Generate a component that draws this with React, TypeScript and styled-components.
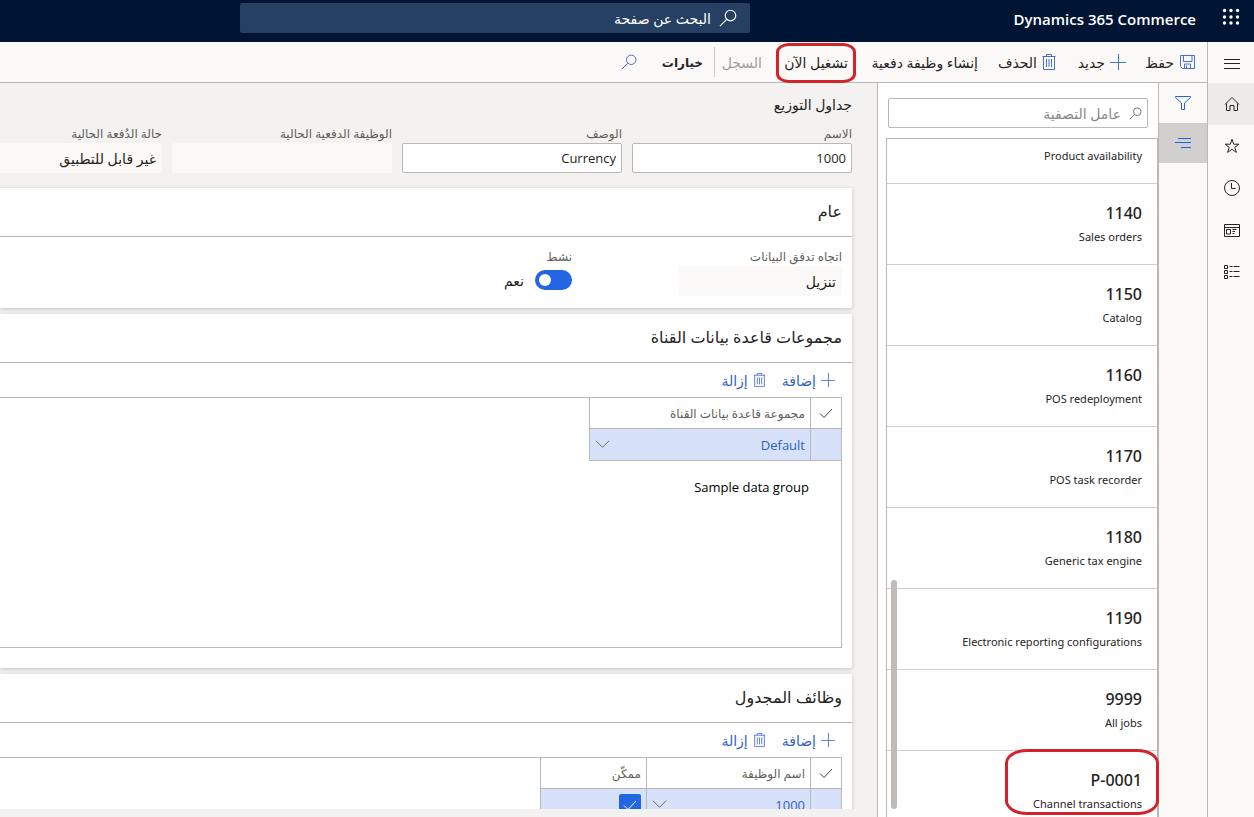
import React from "react";
import styled, { createGlobalStyle, css } from "styled-components";

const color = {
  navy: "#001433",
  search: "#264064",
  link: "#2f62c4",
  icon: "#4a6fd0",
  accent: "#2266e3",
  line: "#bab8b7",
  softLine: "#d0cecc",
  chrome: "#faf9f8",
  canvas: "#f3f2f1",
  selected: "#d2d0ce",
  rowSelected: "#d7e2fa",
  text: "#252423",
  label: "#605e5c",
  callout: "#d2232a",
};

const GlobalStyle = createGlobalStyle`
  *, *::before, *::after { box-sizing: border-box; }
  body { margin: 0; font-family: "Open Sans", "DejaVu Sans", sans-serif; color: ${color.text}; }
  button, input, select { font: inherit; color: inherit; }
  button { border: 0; background: none; padding: 0; cursor: pointer; }
`;

const Page = styled.div`
  display: flex;
  flex-direction: column;
  height: 100vh;
  overflow: hidden;
  background: ${color.canvas};
`;

const TopBar = styled.header`
  display: grid;
  grid-template-columns: 1fr 510px 240px;
  height: 42px;
  flex: none;
  background: ${color.navy};
  color: #fff;
`;

const Brand = styled.div`
  display: flex;
  align-items: center;
  gap: 26px;
  padding-right: 14px;
  padding-bottom: 5px;
`;

const BrandName = styled.a`
  color: inherit;
  text-decoration: none;
  font-size: 15px;
  line-height: 20px;
  font-weight: 600;
  white-space: nowrap;
`;

const PageSearch = styled.label`
  display: flex;
  align-items: center;
  gap: 8px;
  height: 30px;
  margin-top: 3px;
  padding: 0 13px;
  border-radius: 2px;
  background: ${color.search};
`;

const BareInput = styled.input<{ $tone: string }>`
  flex: 1;
  min-width: 0;
  border: 0;
  padding: 0;
  outline: 0;
  background: none;
  font-size: 14px;
  color: ${(p) => p.$tone};
  &::placeholder { color: ${(p) => p.$tone}; opacity: 1; }
`;

const Body = styled.div`
  display: flex;
  flex: 1;
  min-height: 0;
`;

const NavRail = styled.nav`
  display: flex;
  flex-direction: column;
  flex: none;
  width: 47px;
  border-left: 1px solid ${color.line};
  background: ${color.chrome};
`;

const NavButton = styled.button<{ $active?: boolean }>`
  display: grid;
  place-items: center;
  height: 42px;
  padding-left: 2px;
  background: ${(p) => (p.$active ? "#edebe9" : "transparent")};
  &:first-child { height: 41px; }
`;

const Workspace = styled.div`
  display: flex;
  flex-direction: column;
  flex: 1;
  min-width: 0;
`;

const ActionBar = styled.div`
  display: flex;
  align-items: center;
  flex: none;
  height: 41px;
  padding-right: 12px;
  border-bottom: 1px solid ${color.line};
  background: ${color.chrome};
`;

const Action = styled.button<{ $width: number; $strong?: boolean }>`
  position: relative;
  display: flex;
  align-items: center;
  gap: 5px;
  flex: none;
  width: ${(p) => p.$width}px;
  height: 40px;
  font-size: ${(p) => (p.$strong ? 12 : 14)}px;
  font-weight: ${(p) => (p.$strong ? 700 : 400)};
  white-space: nowrap;
  &:disabled { color: #a19f9d; }
`;

const Separator = styled.span`
  width: 1px;
  height: 30px;
  margin-left: 11px;
  background: ${color.softLine};
`;

const callout = css`
  &::after {
    content: "";
    position: absolute;
    border: 3px solid ${color.callout};
    pointer-events: none;
    z-index: 2;
  }
`;

const FlaggedAction = styled(Action)`
  ${callout}
  &::after { top: 1px; bottom: -1px; right: -8px; width: 80px; border-radius: 13px / 9px; }
`;

const Columns = styled.div`
  display: flex;
  flex: 1;
  min-height: 0;
`;

const ToolRail = styled.div`
  display: flex;
  flex-direction: column;
  flex: none;
  width: 48px;
  background: ${color.chrome};
`;

const ToolButton = styled.button<{ $active?: boolean }>`
  display: grid;
  place-items: center;
  height: 40px;
  background: ${(p) => (p.$active ? color.selected : "transparent")};
`;

const ListPane = styled.aside`
  display: flex;
  flex-direction: column;
  flex: none;
  width: 282px;
  border: 0 solid ${color.line};
  border-width: 0 1px;
  background: #fff;
`;

const FilterBox = styled.label`
  display: flex;
  align-items: center;
  gap: 8px;
  flex: none;
  height: 30px;
  margin: 15px 10px 10px;
  padding: 0 5px;
  border: 1px solid ${color.line};
  border-radius: 2px;
`;

const ListFrame = styled.div`
  position: relative;
  flex: 1;
  min-height: 0;
  margin-left: 8px;
  border: 1px solid ${color.line};
  border-bottom: 0;
`;

const Records = styled.ul`
  margin: 0;
  padding: 0;
  list-style: none;
  font-family: "Noto Sans", "DejaVu Sans", sans-serif;
`;

const Record = styled.li<{ $partial?: boolean; $flagged?: boolean }>`
  position: relative;
  height: ${(p) => (p.$partial ? 45 : 81)}px;
  padding: ${(p) => (p.$partial ? 5 : 17)}px 15px 0;
  border-bottom: 1px solid ${color.softLine};
  &:last-child { height: 66px; border: 0; }
  ${(p) =>
    p.$flagged &&
    css`
      ${callout}
      &::after { top: -2px; right: -2px; width: 154px; height: 66px; border-radius: 22px / 14px; }
    `}
`;

const RecordCode = styled.div`
  font-size: 16px;
  line-height: 24px;
  font-weight: 500;
`;

const RecordName = styled.div`
  margin-top: 3px;
  font-size: 11px;
  line-height: 18px;
`;

const Scrollbar = styled.div`
  position: absolute;
  left: 4px;
  bottom: 8px;
  width: 6px;
  height: 229px;
  border-radius: 3px;
  background: #bebbb8;
`;

const Main = styled.main`
  flex: 1;
  min-width: 0;
  margin-bottom: 8px;
  padding: 11px 25px 0 0;
  overflow: hidden;
`;

const Heading = styled.h1`
  margin: 0;
  font-size: 14px;
  line-height: 22px;
  font-weight: 400;
`;

const HeaderFields = styled.div`
  display: flex;
  gap: 10px;
  margin: 9px 0 15px;
`;

const Field = styled.div<{ $width: number }>`
  display: flex;
  flex-direction: column;
  flex: none;
  width: ${(p) => p.$width}px;
`;

const FieldLabel = styled.label`
  font-size: 12px;
  line-height: 18px;
  color: ${color.label};
`;

const TextBox = styled.input`
  height: 30px;
  padding: 0 5px;
  border: 1px solid ${color.line};
  border-radius: 2px;
  background: #fff;
  font-size: 13px;
  outline: 0;
  &:read-only { border-color: transparent; background: ${color.chrome}; font-size: 14px; }
`;

const Card = styled.section<{ $height: number }>`
  height: ${(p) => p.$height}px;
  margin-bottom: 6px;
  border-radius: 0 2px 2px 0;
  background: #fff;
  box-shadow: 0 1px 4px rgba(0, 0, 0, 0.2);
`;

const CardTitle = styled.h2`
  margin: 0;
  padding-right: 10px;
  height: 49px;
  border-bottom: 1px solid ${color.line};
  font-size: 16px;
  line-height: 46px;
  font-weight: 500;
`;

const CardFields = styled.div`
  display: flex;
  gap: 107px;
  padding: 11px 10px 0 0;
`;

const SwitchRow = styled.div`
  display: flex;
  align-items: center;
  gap: 11px;
  height: 28px;
  font-size: 14px;
`;

const Switch = styled.input`
  appearance: none;
  display: flex;
  align-items: center;
  justify-content: flex-end;
  width: 37px;
  height: 20px;
  margin: 0;
  padding: 0 4px;
  border-radius: 10px;
  background: ${color.accent};
  &::before {
    content: "";
    width: 12px;
    height: 12px;
    border-radius: 50%;
    background: #fff;
  }
`;

const GridTools = styled.div`
  display: flex;
  gap: 16px;
  height: 34px;
  padding-right: 17px;
`;

const GridTool = styled.button`
  display: flex;
  align-items: center;
  gap: 5px;
  font-size: 14px;
  color: ${color.link};
`;

const GridFrame = styled.div<{ $height: number }>`
  height: ${(p) => p.$height}px;
  margin-right: 10px;
  border: 1px solid ${color.line};
  border-left: 0;
`;

const Table = styled.table`
  table-layout: fixed;
  border-collapse: separate;
  border-spacing: 0;
`;

const Th = styled.th<{ $width: number }>`
  width: ${(p) => p.$width}px;
  height: 31px;
  padding: 0 5px;
  border: 0 solid ${color.line};
  border-width: 0 0 1px 1px;
  font-size: 12px;
  font-weight: 400;
  text-align: start;
  color: ${color.label};
  svg { display: block; margin: 0 auto; }
`;

const Td = styled.td<{ $plain?: boolean }>`
  height: ${(p) => (p.$plain ? 52 : 32)}px;
  padding: 0 ${(p) => (p.$plain ? 1 : 5)}px;
  border: 0 solid ${color.line};
  border-width: ${(p) => (p.$plain ? 0 : "0 0 1px 1px")};
  background: ${(p) => (p.$plain ? "transparent" : color.rowSelected)};
  color: ${(p) => (p.$plain ? "#000" : color.link)};
  font-size: 13px;
`;

const Stack = styled.div`
  display: grid;
  align-items: center;
  > * { grid-area: 1 / 1; }
  > svg { justify-self: end; pointer-events: none; }
`;

const CellSelect = styled.select`
  appearance: none;
  width: 100%;
  border: 0;
  padding: 0;
  background: none;
  outline: 0;
`;

const CheckStack = styled.div`
  display: grid;
  width: 22px;
  place-items: center;
  > * { grid-area: 1 / 1; }
  > svg { pointer-events: none; }
`;

const Tick = styled.input`
  appearance: none;
  width: 22px;
  height: 22px;
  margin: 0;
  border-radius: 2px;
  background: ${color.accent};
`;

type IconProps = { size?: number; stroke?: string; children: React.ReactNode };

const Icon = ({ size = 16, stroke = color.text, children }: IconProps) => (
  <svg width={size} height={size} viewBox="0 0 16 16" fill="none" stroke={stroke} strokeWidth="1" aria-hidden="true">
    {children}
  </svg>
);

const SearchIcon = ({ size, stroke }: { size?: number; stroke?: string }) => (
  <Icon size={size} stroke={stroke}>
    <circle cx="10.2" cy="5.8" r="4.7" />
    <path d="M6.8 9.2 0.8 15.2" />
  </Icon>
);

const SaveIcon = () => (
  <Icon stroke={color.icon}>
    <path d="M1.5 1.5h14v13H3.5L1.5 12.500zM4.500 1.500v6h8.500v-6M5.500 14.500v-4.500h6v4.500M7.500 14v-2.500" />
  </Icon>
);

const PlusIcon = ({ size }: { size?: number }) => (
  <Icon size={size} stroke={color.icon}>
    <path d="M8.500 0v16M0 8.500h16" />
  </Icon>
);

const TrashIcon = ({ small }: { small?: boolean }) => (
  <svg width={small ? 13 : 14} height={small ? 14 : 16} viewBox="0 0 14 16" fill="none" stroke={color.icon} aria-hidden="true">
    <path d="M0.500 2.500h13M4.500 2.500v-2h5v2M1.500 2.500v13h11v-13M4.500 5v8M7 5v8M9.500 5v8" />
  </svg>
);

const ChevronIcon = () => (
  <Icon size={15} stroke="#605e5c">
    <path d="M1 4 8 11l7-7" />
  </Icon>
);

const CheckIcon = ({ stroke = "#3b3a39" }: { stroke?: string }) => (
  <Icon stroke={stroke}>
    <path d="M2 8.500 6 12.500 14 4" />
  </Icon>
);

const WaffleIcon = () => (
  <svg width="18" height="18" viewBox="0 0 18 18" fill="#fff" aria-hidden="true">
    {[3.5, 10, 16].flatMap((y) => [2.5, 9, 15.5].map((x) => <circle key={`${x}-${y}`} cx={x} cy={y} r="1.7" />))}
  </svg>
);

const MenuIcon = () => (
  <Icon>
    <path d="M0 4.500h16M0 8.500h16M0 13.500h16" />
  </Icon>
);

const HomeIcon = () => (
  <Icon>
    <path d="M1 8.500 8 1.500l7 7M2.500 7.500v7h3.500V9.500h4v5h3.500v-7" />
  </Icon>
);

const StarIcon = () => (
  <Icon>
    <path d="M8 1.200 9.700 6.200H15L10.800 9.300 12.400 14.400 8 11.300 3.600 14.400 5.200 9.300 1 6.200H6.300z" />
  </Icon>
);

const ClockIcon = () => (
  <Icon>
    <circle cx="8" cy="8" r="7.500" />
    <path d="M7.500 3v5.500H11.500" />
  </Icon>
);

const WorkspaceIcon = () => (
  <Icon>
    <path d="M0.500 2.500h15v12h-15zM0.500 5.500h15M2.500 7.500h4v4.500h-4zM8.500 7.500h4M8.500 9.500h2.500M8.500 11.500h2" />
  </Icon>
);

const ModulesIcon = () => (
  <Icon>
    <path d="M0.500 1.500h3v3h-3zM0.500 6.500h3v3h-3zM0.500 11.500h3v3h-3zM5.500 2.500h3M9.500 2.500h6M5.500 7.500h3M9.500 7.500h6M5.500 12.500h3M9.500 12.500h6" />
  </Icon>
);

const FunnelIcon = () => (
  <Icon stroke={color.accent}>
    <path d="M0.500 1.500h15v1L9.500 8v6.500h-3V8l-6-5.500z" />
  </Icon>
);

const LinesIcon = () => (
  <Icon stroke={color.accent}>
    <path d="M3 3.500h13M0 7.500h16M6 12.500h10" />
  </Icon>
);

const records = [
  ["1140", "Sales orders"],
  ["1150", "Catalog"],
  ["1160", "POS redeployment"],
  ["1170", "POS task recorder"],
  ["1180", "Generic tax engine"],
  ["1190", "Electronic reporting configurations"],
  ["9999", "All jobs"],
  ["P-0001", "Channel transactions"],
];

const headerFields = [
  { id: "name", label: "الاسم", value: "1000" },
  { id: "description", label: "الوصف", value: "Currency" },
  { id: "batch", label: "الوظيفة الدفعية الحالية", value: "", readOnly: true },
  { id: "status", label: "حالة الدُفعة الحالية", value: "غير قابل للتطبيق", readOnly: true },
];

const GridCommands = () => (
  <GridTools>
    <GridTool type="button">
      <PlusIcon size={14} />
      إضافة
    </GridTool>
    <GridTool type="button">
      <TrashIcon small />
      إزالة
    </GridTool>
  </GridTools>
);

const SelectCell = ({ label, value }: { label: string; value: string }) => (
  <Stack>
    <CellSelect aria-label={label} defaultValue={value}>
      <option>{value}</option>
    </CellSelect>
    <ChevronIcon />
  </Stack>
);

export default function App() {
  return (
    <Page dir="rtl" lang="ar">
      <GlobalStyle />
      <TopBar>
        <Brand>
          <button type="button" aria-label="مشغل التطبيقات">
            <WaffleIcon />
          </button>
          <BrandName href="#">Dynamics 365 Commerce</BrandName>
        </Brand>
        <PageSearch>
          <SearchIcon size={18} stroke="#fff" />
          <BareInput $tone="#fff" type="text" placeholder="البحث عن صفحة" />
        </PageSearch>
      </TopBar>
      <Body>
        <NavRail>
          <NavButton type="button" aria-label="القائمة"><MenuIcon /></NavButton>
          <NavButton type="button" aria-label="الصفحة الرئيسية" $active><HomeIcon /></NavButton>
          <NavButton type="button" aria-label="المفضلة"><StarIcon /></NavButton>
          <NavButton type="button" aria-label="الأخيرة"><ClockIcon /></NavButton>
          <NavButton type="button" aria-label="مساحات العمل"><WorkspaceIcon /></NavButton>
          <NavButton type="button" aria-label="الوحدات النمطية"><ModulesIcon /></NavButton>
        </NavRail>
        <Workspace>
          <ActionBar>
            <Action type="button" $width={69}><SaveIcon />حفظ</Action>
            <Action type="button" $width={70}><PlusIcon />جديد</Action>
            <Action type="button" $width={78}><TrashIcon />الحذف</Action>
            <Action type="button" $width={130}>إنشاء وظيفة دفعية</Action>
            <FlaggedAction type="button" $width={86}>تشغيل الآن</FlaggedAction>
            <Action type="button" $width={47} disabled>السجل</Action>
            <Separator />
            <Action type="button" $width={66} $strong>خيارات</Action>
            <Action type="button" $width={16} aria-label="بحث"><SearchIcon stroke={color.icon} /></Action>
          </ActionBar>
          <Columns>
            <ToolRail>
              <ToolButton type="button" aria-label="تصفية"><FunnelIcon /></ToolButton>
              <ToolButton type="button" aria-label="القائمة المرتبطة" $active><LinesIcon /></ToolButton>
            </ToolRail>
            <ListPane>
              <FilterBox>
                <SearchIcon size={13} stroke="#605e5c" />
                <BareInput $tone="#8a8886" type="text" placeholder="عامل التصفية" />
              </FilterBox>
              <ListFrame>
                <Records>
                  <Record $partial>
                    <RecordName>Product availability</RecordName>
                  </Record>
                  {records.map(([code, name]) => (
                    <Record key={code} $flagged={code === "P-0001"}>
                      <RecordCode>{code}</RecordCode>
                      <RecordName>{name}</RecordName>
                    </Record>
                  ))}
                </Records>
                <Scrollbar />
              </ListFrame>
            </ListPane>
            <Main>
              <Heading>جداول التوزيع</Heading>
              <HeaderFields>
                {headerFields.map((f) => (
                  <Field key={f.id} $width={220}>
                    <FieldLabel htmlFor={f.id}>{f.label}</FieldLabel>
                    <TextBox id={f.id} type="text" defaultValue={f.value} readOnly={f.readOnly} />
                  </Field>
                ))}
              </HeaderFields>
              <Card $height={120}>
                <CardTitle>عام</CardTitle>
                <CardFields>
                  <Field $width={163}>
                    <FieldLabel htmlFor="direction">اتجاه تدفق البيانات</FieldLabel>
                    <TextBox id="direction" type="text" defaultValue="تنزيل" readOnly />
                  </Field>
                  <Field $width={163}>
                    <FieldLabel htmlFor="active">نشط</FieldLabel>
                    <SwitchRow>
                      <Switch id="active" type="checkbox" role="switch" defaultChecked />
                      نعم
                    </SwitchRow>
                  </Field>
                </CardFields>
              </Card>
              <Card $height={354}>
                <CardTitle>مجموعات قاعدة بيانات القناة</CardTitle>
                <GridCommands />
                <GridFrame $height={251}>
                  <Table>
                    <thead>
                      <tr>
                        <Th $width={31}><CheckIcon /></Th>
                        <Th $width={221}>مجموعة قاعدة بيانات القناة</Th>
                      </tr>
                    </thead>
                    <tbody>
                      <tr>
                        <Td />
                        <Td><SelectCell label="مجموعة قاعدة بيانات القناة" value="Default" /></Td>
                      </tr>
                      <tr>
                        <Td $plain />
                        <Td $plain>Sample data group</Td>
                      </tr>
                    </tbody>
                  </Table>
                </GridFrame>
              </Card>
              <Card $height={354}>
                <CardTitle>وظائف المجدول</CardTitle>
                <GridCommands />
                <GridFrame $height={251}>
                  <Table>
                    <thead>
                      <tr>
                        <Th $width={31}><CheckIcon /></Th>
                        <Th $width={164}>اسم الوظيفة</Th>
                        <Th $width={106}>ممكّن</Th>
                      </tr>
                    </thead>
                    <tbody>
                      <tr>
                        <Td />
                        <Td><SelectCell label="اسم الوظيفة" value="1000" /></Td>
                        <Td>
                          <CheckStack>
                            <Tick type="checkbox" aria-label="ممكّن" defaultChecked />
                            <CheckIcon stroke="#fff" />
                          </CheckStack>
                        </Td>
                      </tr>
                    </tbody>
                  </Table>
                </GridFrame>
              </Card>
            </Main>
          </Columns>
        </Workspace>
      </Body>
    </Page>
  );
}
